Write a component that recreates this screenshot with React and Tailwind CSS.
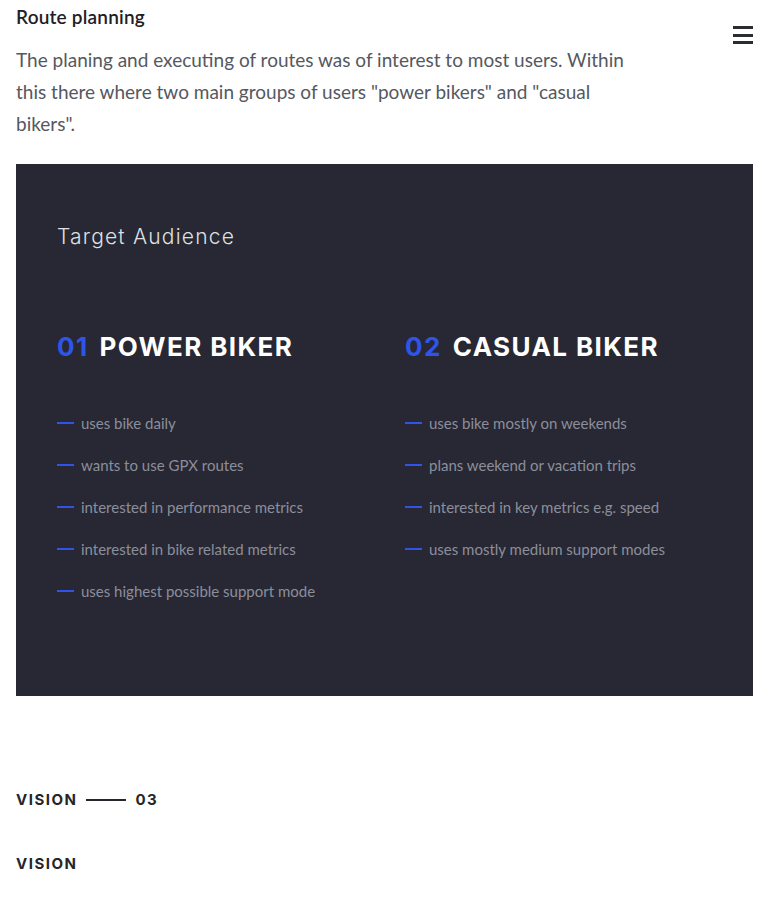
const power = [
  'uses bike daily',
  'wants to use GPX routes',
  'interested in performance metrics',
  'interested in bike related metrics',
  'uses highest possible support mode',
];

const casual = [
  'uses bike mostly on weekends',
  'plans weekend or vacation trips',
  'interested in key metrics e.g. speed',
  'uses mostly medium support modes',
];

const display = { fontFamily: 'Inter, "Open Sans", sans-serif' };

function Persona({ num, title, items }) {
  return (
    <div className="flex flex-col">
      <h3 className="flex text-[26px] font-bold leading-none tracking-[1.4px] text-white" style={display}>
        <span className="mr-[11px] text-[#2f55e8]">{num}</span>
        <span>{title}</span>
      </h3>
      <ul className="mt-[52px] flex flex-col gap-[20px]">
        {items.map((t) => (
          <li key={t} className="flex items-center gap-[7px] text-[15px] leading-[22px] text-[#8c8e9b]">
            <span className="block h-[2px] w-[17px] bg-[#2f55e8]" />
            {t}
          </li>
        ))}
      </ul>
    </div>
  );
}

export default function App() {
  return (
    <div className="min-h-[900px] bg-white px-4" style={{ fontFamily: 'Lato, "Noto Sans", sans-serif' }}>
      {/* Intro */}
      <div className="flex justify-between">
        <div className="max-w-[612px]">
          <h2 className="pt-[5px] text-[19px] font-semibold leading-[24px] tracking-[0.2px] text-[#1f2024]">Route planning</h2>
          <p className="mt-[15px] text-[19px] leading-[32px] text-[#555860]">
            The planing and executing of routes was of interest to most users. Within this there where two main groups of users "power bikers" and "casual bikers".
          </p>
        </div>
        <div className="mt-[25px] flex h-[20px] w-[20px] flex-col justify-between py-[1px]">
          <span className="block h-[3px] w-full bg-[#2a2c31]" />
          <span className="block h-[3px] w-full bg-[#2a2c31]" />
          <span className="block h-[3px] w-full bg-[#2a2c31]" />
        </div>
      </div>

      {/* Target audience panel */}
      <div className="mt-[24px] h-[532px] bg-[#272833] px-[41px] pt-[59px]">
        <p className="text-[21px] font-light leading-[28px] tracking-[1.2px] text-[#dfe0e4]" style={display}>
          Target Audience
        </p>
        <div className="mt-[83px] grid grid-cols-[348px_1fr]">
          <Persona num="01" title="POWER BIKER" items={power} />
          <Persona num="02" title="CASUAL BIKER" items={casual} />
        </div>
      </div>

      {/* Vision */}
      <div className="mt-[93px] flex items-center gap-[9px] text-[15px] font-bold tracking-[1.5px] text-[#24262b]" style={display}>
        <span>VISION</span>
        <span className="block h-[2px] w-[40px] bg-[#24262b]" />
        <span>03</span>
      </div>
      <p className="mt-[41px] text-[15px] font-bold tracking-[1.5px] text-[#24262b]" style={display}>
        VISION
      </p>
    </div>
  );
}
